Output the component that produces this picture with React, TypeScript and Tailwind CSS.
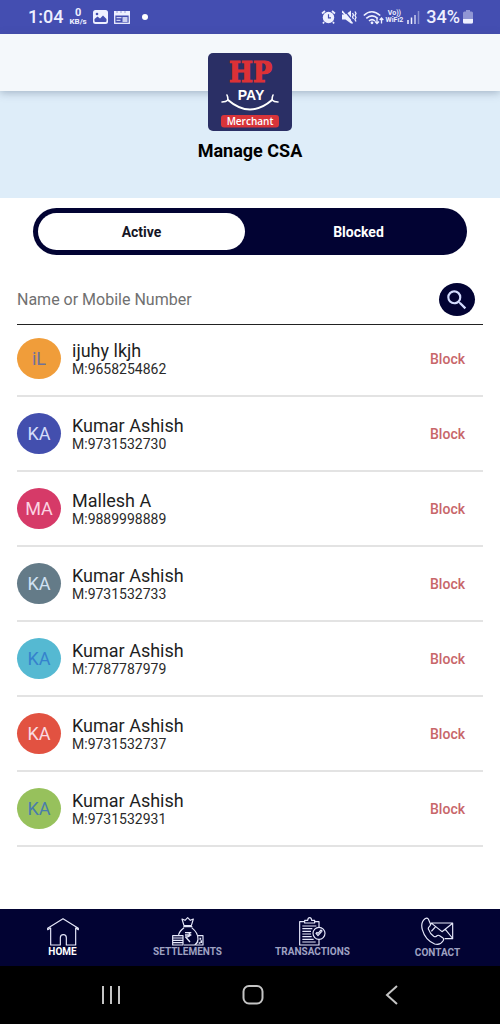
import React, { useState } from 'react';
import { MdSearch } from 'react-icons/md';

interface Csa {
  id: number;
  name: string;
  mobile: string;
  initials: string;
  avatar: string;
}

const csaList: Csa[] = [
  { id: 1, name: 'ijuhy lkjh', mobile: '9658254862', initials: 'iL', avatar: 'bg-[#f09d3a] text-[#70719a]' },
  { id: 2, name: 'Kumar Ashish', mobile: '9731532730', initials: 'KA', avatar: 'bg-[#434fae] text-[#d5dcfa]' },
  { id: 3, name: 'Mallesh A', mobile: '9889998889', initials: 'MA', avatar: 'bg-[#d63a68] text-[#fbd3e2]' },
  { id: 4, name: 'Kumar Ashish', mobile: '9731532733', initials: 'KA', avatar: 'bg-[#647b88] text-[#d0e1f3]' },
  { id: 5, name: 'Kumar Ashish', mobile: '7787787979', initials: 'KA', avatar: 'bg-[#55b9d2] text-[#3582cd]' },
  { id: 6, name: 'Kumar Ashish', mobile: '9731532737', initials: 'KA', avatar: 'bg-[#e25241] text-[#f9dbe2]' },
  { id: 7, name: 'Kumar Ashish', mobile: '9731532931', initials: 'KA', avatar: 'bg-[#97c15c] text-[#4a7dac]' },
];

function StatusBar() {
  return (
    <div className="flex h-[34px] items-center justify-between bg-[#444eb1] pl-7 pr-[27px] text-[#eef0ff]">
      <div className="flex items-center">
        <span className="text-lg font-medium leading-5">1:04</span>
        <span className="ml-1.5 flex flex-col items-center font-bold">
          <span className="text-[11px] leading-[10px]">0</span>
          <span className="text-[8px] leading-[8px]">KB/s</span>
        </span>
        {/* Gallery */}
        <svg className="ml-1.5" width="15" height="14" viewBox="0 0 15 14">
          <rect width="15" height="14" rx="2.5" fill="currentColor" />
          <circle cx="4" cy="4" r="1.3" fill="#444eb1" />
          <path d="M1.5 11V9l3-2.5L7 8.5l3-3L13.5 9v2q0 1-1 1h-10q-1 0-1-1z" fill="#444eb1" />
        </svg>
        {/* News */}
        <svg className="ml-1.5" width="16" height="13" viewBox="0 0 16 13">
          <rect x=".7" y=".7" width="14.6" height="11.6" fill="none" stroke="currentColor" strokeWidth="1.3" />
          <path d="M0 0h16v4.5H0z" fill="currentColor" />
          <path d="M2.5 6.7h5M2.5 9.3h4" stroke="currentColor" />
          <path d="M8.5 6h5v5h-5z" fill="currentColor" opacity=".8" />
          <path d="M3 .5v1M7 .5v1M11 .5v1" stroke="#444eb1" />
        </svg>
        <span className="ml-3 h-1.5 w-1.5 rounded-full bg-white"></span>
      </div>

      <div className="flex items-center">
        {/* Alarm */}
        <svg width="15" height="14" viewBox="0 0 15 14">
          <circle cx="7.5" cy="7.5" r="5.7" fill="currentColor" />
          <path d="M1 3.5 4 1M14 3.5 11 1M3 12l-1 1.5M12 12l1 1.5" stroke="currentColor" strokeWidth="1.7" />
          <path d="M7.5 4.3v3.5H10" fill="none" stroke="#444eb1" strokeWidth="1.2" />
        </svg>
        {/* Vibrate / mute */}
        <svg className="ml-1.5" width="15" height="14" viewBox="0 0 15 14">
          <path d="M0 4.500h3.500L9 .5v13L3.500 9.500H0z" fill="currentColor" />
          <path d="m2 0 9 11" stroke="#444eb1" strokeWidth="1.200" />
          <path d="m0 1 10.500 12.500" stroke="currentColor" strokeWidth="1.600" />
          <path d="m10.500 3 1 2-1 2 1 2M13 1.500l1 2-1 2 1 2-1 2 1 2" fill="none" stroke="currentColor" strokeWidth="1.300" />
        </svg>
        {/* Wifi */}
        <svg className="ml-1.5" width="21" height="15" viewBox="0 0 21 15">
          <g fill="none" stroke="currentColor" strokeWidth="1.6">
            <path d="M.8 5.500q8-7.500 16.400 0M3.300 8.300q5.700-5 11.400 0M6 11q3-2.600 6 0" />
            <path d="M14 8v5.500M12 11.500l2 2 2-2M18.500 13.500V8M16.700 10l1.800-2 1.800 2" strokeWidth="1.3" />
          </g>
          <circle cx="9" cy="12.800" r="1.400" fill="currentColor" />
        </svg>
        <span className="ml-0.5 flex flex-col text-center text-[7px] font-bold leading-[7px]">
          <span>Vo))</span>
          <span>WiFi2</span>
        </span>
        {/* Signal */}
        <svg className="ml-1" width="13" height="13" viewBox="0 0 13 13">
          <path d="M1 9v4M4.500 6.500V13" stroke="currentColor" strokeWidth="1.500" />
          <path d="M8 4v9" stroke="currentColor" strokeWidth="1.500" opacity=".8" />
          <path d="M11.500 0v13" stroke="currentColor" strokeWidth="1.500" opacity=".4" />
        </svg>
        <span className="ml-1.5 text-lg font-medium leading-5">34%</span>
        {/* Battery */}
        <svg className="ml-[3px]" width="10" height="14" viewBox="0 0 10 14">
          <path d="M3 0h4v1.500h1.500Q10 1.500 10 3v9q0 1.500-1.500 1.500h-7Q0 13.500 0 12V3q0-1.500 1.500-1.500H3z" fill="currentColor" opacity=".45" />
          <path d="M0 9h10v3q0 1.500-1.500 1.500h-7Q0 13.500 0 12z" fill="currentColor" />
        </svg>
      </div>
    </div>
  );
}

function Logo() {
  return (
    <svg width="84" height="78" viewBox="0 0 84 78" role="img" aria-label="HP Pay Merchant">
      <rect width="84" height="78" rx="5" fill="#2a2f65" />
      <text x="42.500" y="29" textAnchor="middle" fontFamily="'DejaVu Serif Condensed', 'DejaVu Serif', serif" fontWeight="700" fontSize="28" fill="#dc3136" stroke="#dc3136" strokeWidth="1.200">HP</text>
      <text x="43" y="47" textAnchor="middle" fontFamily="'Liberation Sans', sans-serif" fontWeight="700" fontSize="14" fill="#fff">PAY</text>
      <g fill="none" stroke="#fff" strokeLinecap="round">
        <path d="M20 47q22 19 44 0" strokeWidth="2" />
        <path d="M20 47q-2 2-6 2M20 47q0-3-1-5M64 47q2 2 6 2M64 47q0-3 1-5" strokeWidth="1.600" />
      </g>
      <rect x="13" y="62" width="58" height="12.500" rx="3" fill="#d8343a" />
      <text x="42" y="72" textAnchor="middle" fontFamily="'Open Sans', sans-serif" fontWeight="600" fontSize="10" fill="#fff">Merchant</text>
    </svg>
  );
}

function HomeIcon() {
  return (
    <svg width="32" height="29" viewBox="0 0 96 87" fill="none" stroke="currentColor" strokeWidth="3.500" strokeLinejoin="round">
      <path d="M2 38v-4L48 5l46 29v4L86 33v51H58V62q0-9-9-9t-9 9v22H11V33z" />
    </svg>
  );
}

function SettlementsIcon() {
  return (
    <svg width="32" height="29" viewBox="0 0 96 87" fill="none" stroke="currentColor" strokeWidth="3.500" strokeLinejoin="round">
      <path d="M36 26 30 6l9 4 8-8 8 8 9-4-6 20zM34 29h27" />
      <path d="M36 32Q18 46 20 57M59 32q20 16 19 35-1 12-10 17H36" />
      <path d="M2 56h31v28H2zM2 63h31M2 70h31M2 77h31" />
      <path d="M78 56h15v28H70" />
      <path d="M85 62v6M88 70v8M80 78h5" strokeWidth="5" />
      <path d="M39 47h19M39 54h19M43 47q11 0 11 6t-13 7l13 15" strokeWidth="4" />
    </svg>
  );
}

function TransactionsIcon() {
  return (
    <svg width="27" height="29" viewBox="0 0 81 87" fill="none" stroke="currentColor" strokeWidth="3.500" strokeLinejoin="round">
      <path d="M60 31V14H46M17 14H2v70h58V67" />
      <path d="M17 18v-8h9q1-8 6-8t6 8h9v8z" />
      <path d="M10 27h42M10 35h30M10 43h26M10 51h26M10 59h28M10 67h34M10 75h40" />
      <circle cx="60" cy="49" r="18" />
      <path d="m51 49 6 7 12-14-3-3-9 10-3-3z" />
    </svg>
  );
}

function ContactIcon() {
  return (
    <svg width="33" height="30" viewBox="0 0 99 90" fill="none" stroke="currentColor" strokeWidth="3.500" strokeLinejoin="round" strokeLinecap="round">
      <path d="M12 5q6-4 10 1l6 14q2 5-3 9t-2 9q4 12 15 20 5 3 9-1t9-1l9 6q5 4 1 10-9 14-25 9Q13 70 4 38-2 16 12 5z" />
      <path d="M31 18h64v47H72M31 18l-1 3M32 19l31 25 32-25M32 42l10-11M73 37l21 26" />
    </svg>
  );
}

const navItems = [
  { label: 'HOME', icon: <HomeIcon />, active: true },
  { label: 'SETTLEMENTS', icon: <SettlementsIcon />, active: false },
  { label: 'TRANSACTIONS', icon: <TransactionsIcon />, active: false },
  { label: 'CONTACT', icon: <ContactIcon />, active: false },
];

export default function App() {
  const [tab, setTab] = useState<'active' | 'blocked'>('active');
  const [query, setQuery] = useState('');

  const tabClass = (on: boolean) =>
    `flex-1 rounded-full text-sm font-bold cursor-pointer ${on ? 'bg-white text-[#151525]' : 'text-white'}`;

  return (
    <div className="flex min-h-screen flex-col bg-white font-['Roboto',sans-serif]">
      <StatusBar />

      {/* Header */}
      <header>
        <div className="relative h-[57px] bg-[#f4f8fb] shadow-[0_2px_8px_rgba(60,80,110,0.35)]"></div>
        <div className="flex h-[107px] flex-col items-center bg-[#deedf9]">
          <div className="relative -mt-[38px]">
            <Logo />
          </div>
          <h1 className="mt-2 text-lg font-bold leading-6 text-black">Manage CSA</h1>
        </div>
      </header>

      <main className="flex-1 px-[17px]">
        {/* Tabs */}
        <div className="mx-4 mt-2.5 flex h-[47px] gap-2.5 rounded-full bg-[#020333] p-[5px]">
          <button type="button" onClick={() => setTab('active')} className={tabClass(tab === 'active')}>
            Active
          </button>
          <button type="button" onClick={() => setTab('blocked')} className={tabClass(tab === 'blocked')}>
            Blocked
          </button>
        </div>

        {/* Search */}
        <form
          onSubmit={(e) => e.preventDefault()}
          className="mt-7 flex items-center border-b border-[#222] pb-2 pr-2"
        >
          <input
            type="text"
            aria-label="Name or Mobile Number"
            placeholder="Name or Mobile Number"
            value={query}
            onChange={(e) => setQuery(e.target.value)}
            className="min-w-0 flex-1 bg-transparent text-base text-black outline-none placeholder:text-[#707070]"
          />
          <button
            type="submit"
            aria-label="Search"
            className="flex h-[33px] w-9 items-center justify-center rounded-[50%] bg-[#020333] text-[#d3dcff] cursor-pointer"
          >
            <MdSearch className="h-[26px] w-[26px]" />
          </button>
        </form>

        {/* CSA list */}
        <ul>
          {csaList.map((csa) => (
            <li
              key={csa.id}
              className="flex items-center border-b-2 border-[#e3e3e3] pb-4 pt-4 pr-[18px] first:pt-[13px]"
            >
              <div className={`flex h-[41px] w-11 items-center justify-center rounded-[50%] text-lg ${csa.avatar}`}>
                {csa.initials}
              </div>
              <div className="ml-[11px] flex-1">
                <h2 className="text-lg leading-5 text-[#1f1f1f]">{csa.name}</h2>
                <p className="text-sm leading-4 text-[#2a2a2a]">M:{csa.mobile}</p>
              </div>
              <button type="button" className="text-sm font-medium text-[#c8666a] cursor-pointer">
                Block
              </button>
            </li>
          ))}
        </ul>
      </main>

      {/* Bottom navigation */}
      <nav className="grid h-[57px] grid-cols-4 bg-[#020333]">
        {navItems.map((item) => (
          <a
            key={item.label}
            href="#"
            className={`flex flex-col items-center pt-2 text-[10px] leading-3 ${
              item.active ? 'font-bold text-white' : 'font-bold text-[#9fa1c2]'
            }`}
          >
            <span className="text-[#e6e8fa]">{item.icon}</span>
            {item.label}
          </a>
        ))}
      </nav>

      {/* System navigation */}
      <div className="flex h-[58px] items-center justify-between bg-black px-[101px] text-[#c4c4c4]">
        <button type="button" aria-label="Recent apps">
          <svg width="20" height="20" viewBox="0 0 20 20" stroke="currentColor" strokeWidth="2">
            <path d="M2 1v18M10 1v18M18 1v18" />
          </svg>
        </button>
        <button type="button" aria-label="Home">
          <svg width="22" height="20" viewBox="0 0 22 20" fill="none" stroke="currentColor" strokeWidth="2">
            <rect x="1.500" y="1" width="19" height="17.500" rx="5.500" />
          </svg>
        </button>
        <button type="button" aria-label="Back">
          <svg width="14" height="20" viewBox="0 0 14 20" fill="none" stroke="currentColor" strokeWidth="2">
            <path d="M12 1 2 10l10 9" />
          </svg>
        </button>
      </div>
    </div>
  );
}
